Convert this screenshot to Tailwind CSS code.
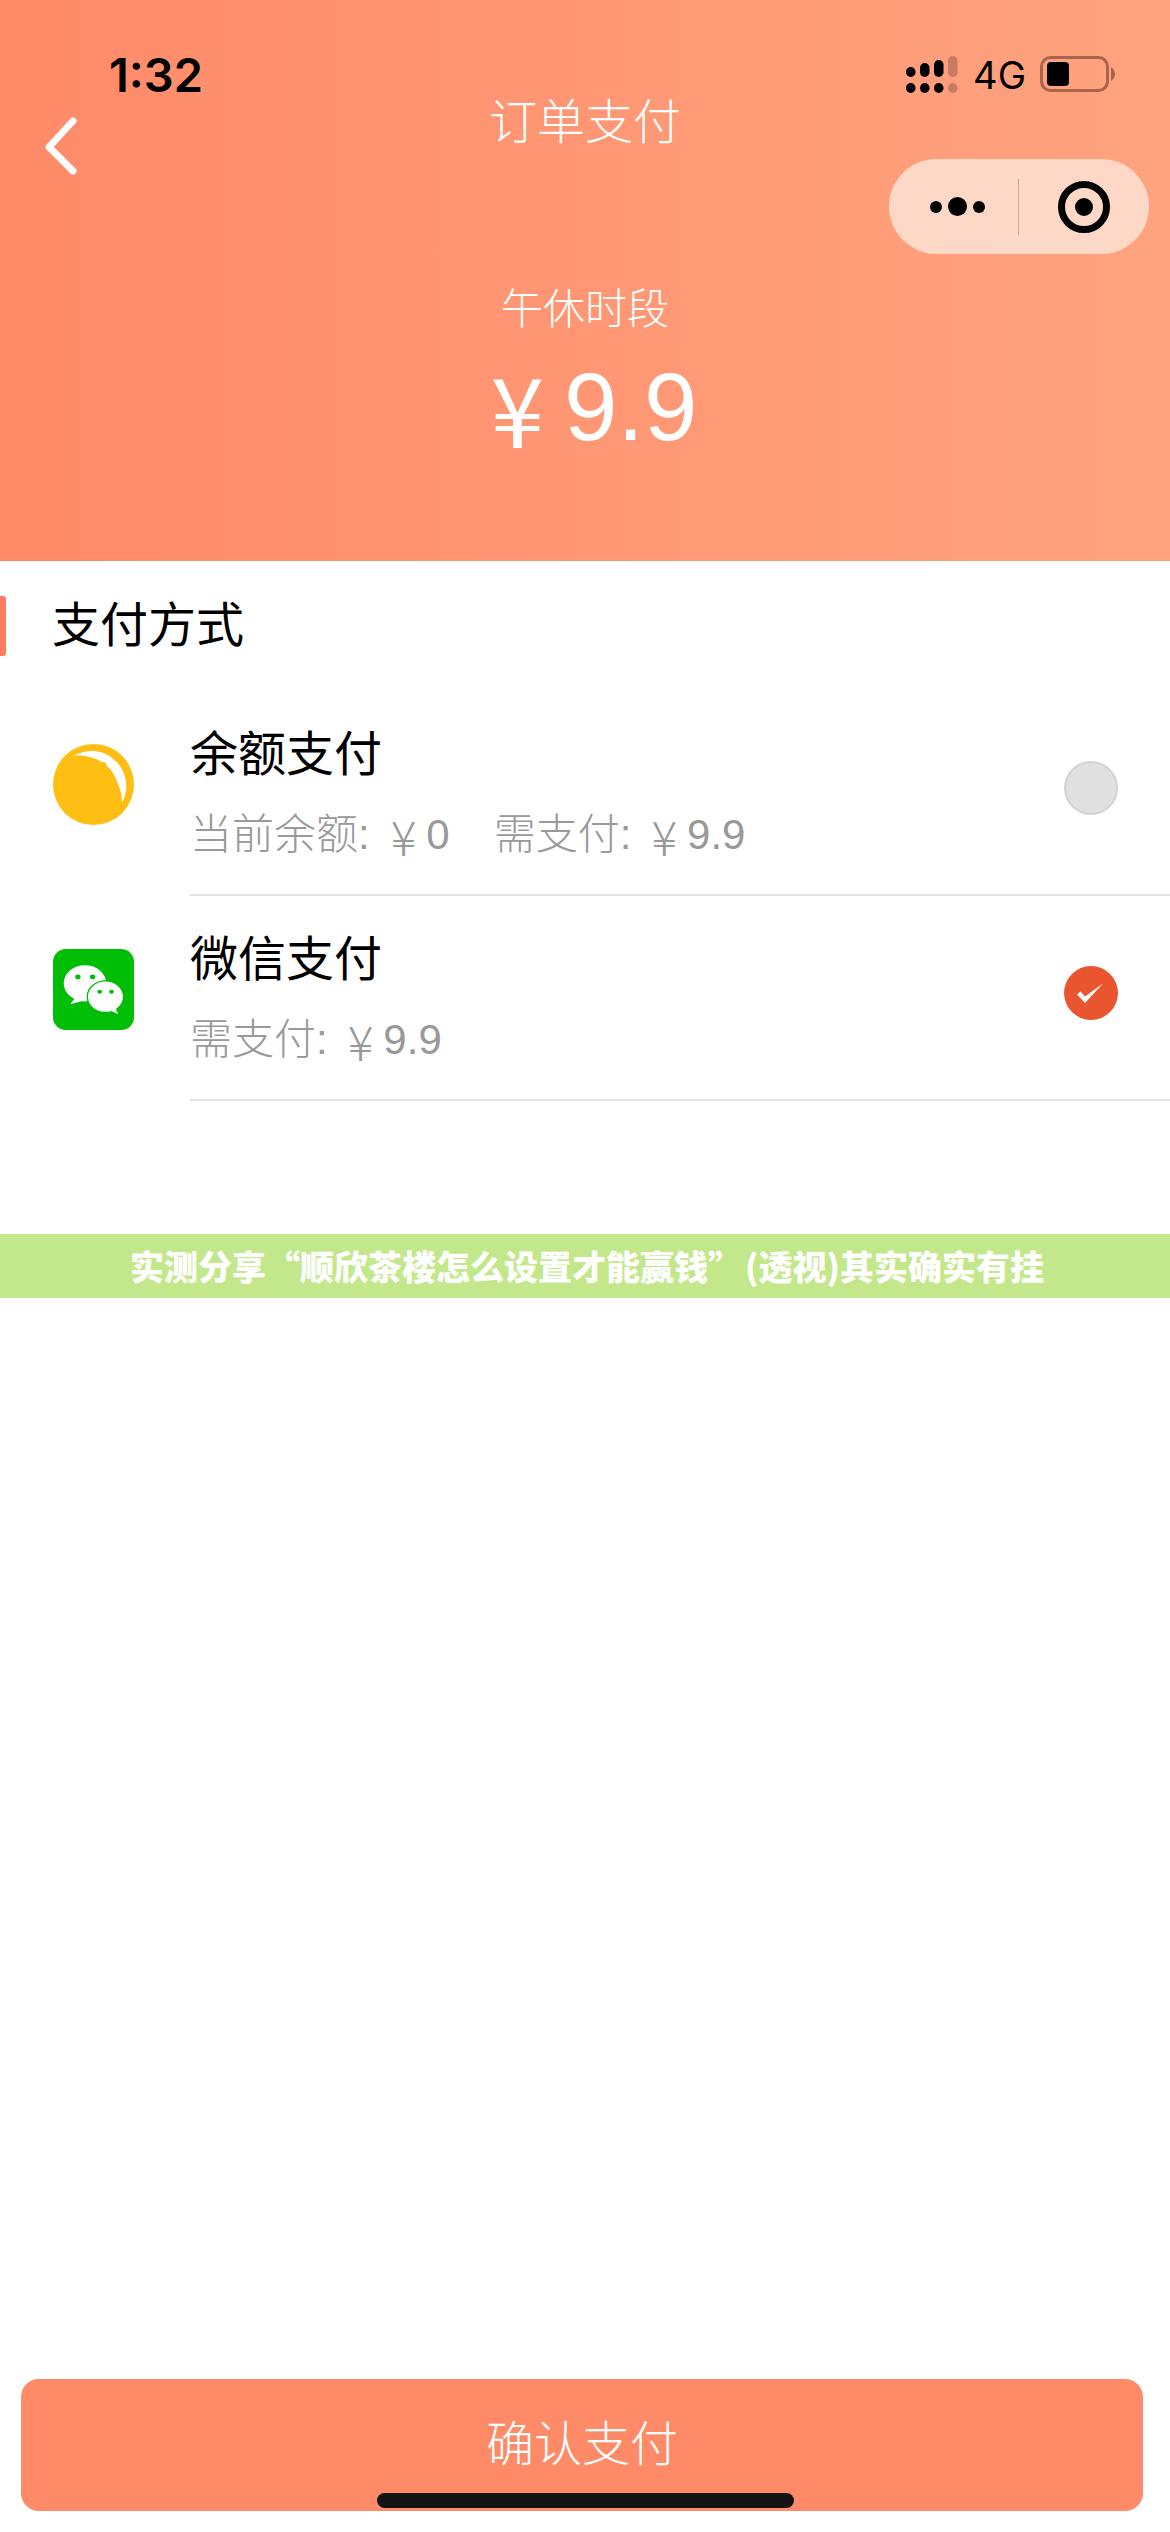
<!doctype html>
<html lang="zh">
<head>
<meta charset="utf-8">
<script src="https://cdn.jsdelivr.net/npm/@tailwindcss/browser@4"></script>
</head>
<body class="m-0 bg-white">
<div class="relative flex h-[2532px] w-[1170px] flex-col overflow-hidden bg-white font-['Liberation_Sans','Noto_Sans_CJK_SC',sans-serif]">

  <header class="relative h-[561px] shrink-0 bg-gradient-to-r from-[#ff8a68] to-[#ffa37f] text-white">
    <div class="flex h-[100px] items-start justify-between">
      <div class="mt-[47px] ml-[109px] font-['Inter',sans-serif] text-[47px] leading-[56px] font-semibold text-black">1:32</div>
      <div class="mt-[56px] mr-[54px] flex items-start">
        <svg width="52" height="37" viewBox="0 0 52 37" class="block">
          <g fill="#000">
            <rect x="0" y="11" width="9.5" height="10" rx="4.7"/><rect x="0" y="27" width="9.5" height="10" rx="4.7"/>
            <rect x="14" y="7" width="9.5" height="14" rx="4.7"/><rect x="14" y="27" width="9.5" height="10" rx="4.7"/>
            <rect x="28" y="4" width="9.5" height="17" rx="4.7"/><rect x="28" y="27" width="9.5" height="10" rx="4.7"/>
          </g>
          <g fill="#000" fill-opacity=".22">
            <rect x="42" y="0" width="9.5" height="21" rx="4.7"/><rect x="42" y="27" width="9.5" height="10" rx="4.7"/>
          </g>
        </svg>
        <span class="ml-[15px] font-['Inter',sans-serif] text-[38px] leading-[38px] font-normal text-black">4G</span>
        <svg width="76" height="36" viewBox="0 0 76 36" class="ml-[14px] block">
          <rect x="1.5" y="1.5" width="66" height="33" rx="9" fill="none" stroke="#a9654b" stroke-width="3"/>
          <rect x="7" y="6" width="22" height="24" rx="4" fill="#000"/>
          <path d="M71 11 Q75 14 75 18 Q75 22 71 25 Z" fill="#a9654b"/>
        </svg>
      </div>
    </div>

    <div class="relative h-[55px]">
      <svg width="40" height="60" viewBox="0 0 40 60" class="absolute top-[16px] left-[41px]">
        <path d="M32 5 L8 31 L32 55" fill="none" stroke="#fff" stroke-width="7" stroke-linecap="round" stroke-linejoin="round"/>
      </svg>
      <div class="pt-[3px] text-center text-[48px] leading-[40px] font-light">订单支付</div>
    </div>

    <div class="mt-[4px] mr-[21px] ml-auto flex h-[95px] w-[260px] items-center rounded-full bg-[#fed8c7]">
      <div class="flex w-[129px] items-center justify-center gap-[6px] pl-[7px]">
        <span class="size-[12px] rounded-full bg-black"></span>
        <span class="size-[19px] rounded-full bg-black"></span>
        <span class="size-[12px] rounded-full bg-black"></span>
      </div>
      <div class="h-[56px] w-px bg-[#c9a998]"></div>
      <div class="flex flex-1 items-center justify-center">
        <div class="flex size-[52px] items-center justify-center rounded-full border-[7px] border-black">
          <span class="size-[18px] rounded-full bg-black"></span>
        </div>
      </div>
    </div>

    <div class="mt-[28px] text-center text-[42px] leading-[56px] font-light">午休时段</div>
    <div class="mt-[21px] flex items-center justify-center pl-[18px] font-['Liberation_Sans',sans-serif] text-[96px] leading-[96px]">
      <span class="mr-[20px] font-['Noto_Sans_CJK_SC',sans-serif] text-[96px] font-normal">¥</span><span>9.9</span>
    </div>
  </header>

  <section class="relative flex-1">
    <div class="mt-[35px] flex h-[60px] items-center">
      <span class="h-[60px] w-[6px] rounded-r-[3px] bg-[#ff7d5c]"></span>
      <h2 class="ml-[46px] text-[48px] leading-[60px] font-normal text-black">支付方式</h2>
    </div>

    <div class="mt-[35px]">
      <div class="flex h-[205px] items-start pl-[53px]">
        <svg width="81" height="81" viewBox="0 0 81 81" class="mt-[53px] shrink-0">
          <circle cx="40.5" cy="40.5" r="40.5" fill="#ffbe14"/>
          <path d="M20.6 11.7 C30 7 38 6.5 44 7.4 C60 9.5 74 25 73.3 44 C73 49 71 55 69 58.4 C69 48 66 43 64.6 39 C62 31 58 25 53 21 C54 18 50 17.5 49.5 18.5 C41 13 31 11 20.6 11.7 Z" fill="#fff"/>
        </svg>
        <div class="ml-[56px] flex h-[205px] flex-1 items-start border-b-2 border-[#e4e4e4]">
          <div class="flex-1">
            <div class="mt-[34px] text-[48px] leading-[60px] text-black">余额支付</div>
            <div class="mt-[20px] flex text-[42px] leading-[60px] font-light text-[#999]">
              <span>当前余额:</span><span class="ml-[21px] font-['Noto_Sans_CJK_SC',sans-serif] text-[48px]">¥</span><span class="ml-[10px] font-['Liberation_Sans',sans-serif]">0</span>
              <span class="ml-[44px]">需支付:</span><span class="ml-[20px] font-['Noto_Sans_CJK_SC',sans-serif] text-[48px]">¥</span><span class="ml-[10px] font-['Liberation_Sans',sans-serif]">9.9</span>
            </div>
          </div>
          <div class="mt-[70px] mr-[52px] size-[54px] rounded-full border-2 border-[#d2d2d2] bg-[#e0e0e0]"></div>
        </div>
      </div>

      <div class="flex h-[205px] items-start pl-[53px]">
        <svg width="81" height="81" viewBox="0 0 241 241" class="mt-[53px] shrink-0">
          <rect width="241" height="241" rx="38" fill="#00bd05"/>
          <ellipse cx="95" cy="102" rx="63" ry="54" fill="#fff"/>
          <path d="M64 148 L52 164 L92 154 Z" fill="#fff"/>
          <ellipse cx="74" cy="83" rx="8" ry="7" fill="#00bd05"/>
          <ellipse cx="118" cy="83" rx="8" ry="7" fill="#00bd05"/>
          <ellipse cx="156" cy="142" rx="54" ry="47" fill="#fff" stroke="#00bd05" stroke-width="4"/>
          <path d="M172 184 L194 194 L186 176 Z" fill="#fff"/>
          <ellipse cx="139" cy="127" rx="7" ry="6" fill="#00bd05"/>
          <ellipse cx="174" cy="127" rx="7" ry="6" fill="#00bd05"/>
        </svg>
        <div class="ml-[56px] flex h-[205px] flex-1 items-start border-b-2 border-[#e4e4e4]">
          <div class="flex-1">
            <div class="mt-[34px] text-[48px] leading-[60px] text-black">微信支付</div>
            <div class="mt-[20px] flex text-[42px] leading-[60px] font-light text-[#999]">
              <span>需支付:</span><span class="ml-[20px] font-['Noto_Sans_CJK_SC',sans-serif] text-[48px]">¥</span><span class="ml-[10px] font-['Liberation_Sans',sans-serif]">9.9</span>
            </div>
          </div>
          <svg width="54" height="54" viewBox="0 0 54 54" class="mt-[70px] mr-[52px] shrink-0">
            <circle cx="27" cy="27" r="27" fill="#e9552e"/>
            <path d="M13 28.5 L16.5 25.5 L21 30.5 L39 17.5 L21 37 Z" fill="#fff"/>
          </svg>
        </div>
      </div>
    </div>

    <div class="mt-[133px] flex h-[64px] items-center justify-center bg-[#c3e88c] pb-[2px] pl-[4px] font-['Noto_Sans_CJK_SC',sans-serif] text-[34px] font-black text-white"><span>实测分享“顺欣茶楼怎么设置才能赢钱”</span><span class="ml-[3px]">(透视)其实确实有挂</span></div>
  </section>

  <button class="mr-[27px] mb-[21px] ml-[21px] flex h-[132px] shrink-0 items-center justify-center rounded-[18px] bg-[#ff8a68] text-[48px] font-light text-white">确认支付</button>
  <div class="absolute top-[2493px] left-[377px] h-[15px] w-[417px] rounded-full bg-[#141414]"></div>
</div>
</body>
</html>
